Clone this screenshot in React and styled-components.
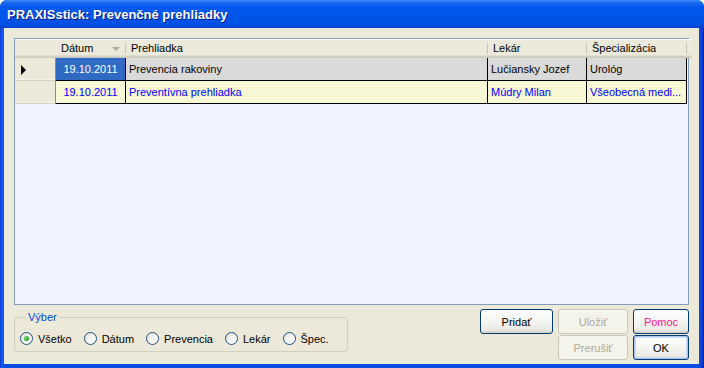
import styled, { createGlobalStyle } from 'styled-components';

const GlobalStyle = createGlobalStyle`
	html, body {
		margin: 0;
		padding: 0;
		width: 704px;
		height: 368px;
		overflow: hidden;
		background: #ffffff;
	}
	body {
		font-family: 'Liberation Sans', Arial, sans-serif;
		font-size: 11px;
		color: #000;
	}
`;

const Window = styled.div`
	width: 704px;
	height: 368px;
	box-sizing: border-box;
	display: flex;
	flex-direction: column;
	background: linear-gradient(to right, #0831d9 0, #1660f0 2px, #0a4de2 4px, #0a4de2 calc(100% - 5px), #0b3fd6 calc(100% - 2px), #0019a8 100%);
	border-radius: 7px 7px 0 0;
	overflow: hidden;
`;

const TitleBar = styled.div`
	height: 28px;
	flex: none;
	display: flex;
	align-items: center;
	padding-left: 7px;
	background: linear-gradient(
		to bottom,
		#3b8ef8 0,
		#1666f0 3px,
		#0058ee 8px,
		#0055e8 18px,
		#0052e4 24px,
		#0043cf 28px
	);
	color: #ffffff;
	font-family: 'Liberation Sans', Arial, sans-serif;
	font-weight: bold;
	font-size: 13px;
	text-shadow: 1px 1px #0a1883;
`;

const Body = styled.div`
	flex: 1;
	margin: 0 5px 4px 4px;
	background: #ece9d8;
	padding: 10px 10px 0 10px;
	display: flex;
	flex-direction: column;
`;

const DataGrid = styled.div`
	height: 267px;
	box-sizing: border-box;
	border: 1px solid #7f9db9;
	background: #eef3fd;
	display: grid;
	grid-template-columns: 41px 70px 362px 99px 100px 1fr;
	grid-auto-rows: min-content;
	align-content: start;
`;

const HeaderCell = styled.div`
	height: 19px;
	box-sizing: border-box;
	background: #ebeadb;
	box-shadow: inset 0 -1px #cbc7b8, inset 0 -2px #d6d2c2, inset 0 -3px #e2decd, inset 0 1px #ffffff;
	padding: 3px 0 0 5px;
	position: relative;
	white-space: nowrap;
	&::after {
		content: '';
		display: ${(p) => (p.$sep ? 'block' : 'none')};
		position: absolute;
		right: 0;
		top: 4px;
		width: 1px;
		height: 11px;
		background: #c7c5b2;
		box-shadow: 1px 0 #ffffff;
	}
`;

const SortArrow = styled.span`
	position: absolute;
	right: 6px;
	top: 8px;
	width: 0;
	height: 0;
	border-left: 4px solid transparent;
	border-right: 4px solid transparent;
	border-top: 4px solid #aca899;
`;

const RowHeader = styled.div`
	height: 23px;
	box-sizing: border-box;
	background: #ece9d8;
	border-right: 1px solid #8d8b7c;
	box-shadow: inset 0 -1px #d6d2c2, inset 0 -2px #f4f3ec;
	display: flex;
	align-items: center;
	padding-left: 6px;
`;

const RowMarker = styled.span`
	width: 0;
	height: 0;
	border-top: 5px solid transparent;
	border-bottom: 5px solid transparent;
	border-left: 5px solid #000000;
`;

const Cell = styled.div`
	height: 23px;
	box-sizing: border-box;
	border-right: 1px solid #000000;
	border-bottom: 1px solid #000000;
	background: ${(p) => (p.$selected ? '#316ac5' : p.$alt ? '#f7f7d4' : '#dadada')};
	color: ${(p) => (p.$selected ? '#ffffff' : p.$alt ? '#0000ff' : '#000000')};
	display: flex;
	align-items: center;
	justify-content: ${(p) => (p.$center ? 'center' : 'flex-start')};
	padding-left: ${(p) => (p.$center ? '0' : '3px')};
	white-space: nowrap;
	overflow: hidden;
`;

const Filler = styled.div`
	height: 23px;
`;

const Footer = styled.div`
	display: flex;
	justify-content: space-between;
	align-items: flex-start;
	padding-top: 4px;
`;

const GroupBox = styled.fieldset`
	margin: 2px 0 0 0;
	padding: 8px 0 6px 5px;
	width: 334px;
	box-sizing: border-box;
	border: 1px solid #d0d0bf;
	border-radius: 3px;
	display: flex;
	align-items: center;
	gap: 12px;
	legend {
		color: #0046d5;
		padding: 0 2px;
		margin-left: 6px;
		line-height: 13px;
	}
`;

const RadioLabel = styled.label`
	display: flex;
	align-items: center;
	gap: 5px;
	height: 13px;
	white-space: nowrap;
`;

const RadioCircle = styled.span`
	width: 13px;
	height: 13px;
	box-sizing: border-box;
	border-radius: 50%;
	border: 1px solid #1c5180;
	background: linear-gradient(135deg, #dcdcd7 0%, #f4f4f2 45%, #ffffff 100%);
	display: flex;
	align-items: center;
	justify-content: center;
	&::after {
		content: '';
		display: ${(p) => (p.$checked ? 'block' : 'none')};
		width: 5px;
		height: 5px;
		border-radius: 50%;
		background: radial-gradient(circle at 35% 35%, #7ee07a 0%, #2fb22c 55%, #1a8a18 100%);
	}
`;

const ButtonGrid = styled.div`
	display: grid;
	grid-template-columns: 73px 70px 56px;
	column-gap: 5px;
	row-gap: 1px;
`;

const Button = styled.button`
	height: 25px;
	box-sizing: border-box;
	margin: 0;
	padding: 0;
	font-family: 'Liberation Sans', Arial, sans-serif;
	font-size: 11px;
	border-radius: 3px;
	border: 1px solid ${(p) => (p.disabled ? '#c9c7ba' : '#003c74')};
	background: ${(p) =>
		p.disabled
			? '#f5f4ea'
			: 'linear-gradient(to bottom, #ffffff 0%, #f7f7f4 40%, #ecebe6 85%, #d6d0c5 100%)'};
	color: ${(p) => (p.disabled ? '#aca899' : p.$color || '#000000')};
	box-shadow: ${(p) => (p.$default ? 'inset 0 0 0 1px #a9c4ee, inset 0 0 0 2px #cedef7' : 'none')};
	grid-column: ${(p) => p.$col || 'auto'};
`;

const rows = [
	{ date: '19.10.2011', name: 'Prevencia rakoviny', doctor: 'Lučiansky Jozef', spec: 'Urológ', current: true },
	{ date: '19.10.2011', name: 'Preventívna prehliadka', doctor: 'Múdry Milan', spec: 'Všeobecná medi...' },
];

const filters = ['Všetko', 'Dátum', 'Prevencia', 'Lekár', 'Špec.'];

const App = () => (
	<>
		<GlobalStyle />
		<Window>
			<TitleBar>PRAXISstick: Prevenčné prehliadky</TitleBar>
			<Body>
				<DataGrid>
					<HeaderCell />
					<HeaderCell $sep>
						Dátum
						<SortArrow />
					</HeaderCell>
					<HeaderCell $sep>Prehliadka</HeaderCell>
					<HeaderCell $sep>Lekár</HeaderCell>
					<HeaderCell $sep>Špecializácia</HeaderCell>
					<HeaderCell />
					{rows.map((row, i) => [
						<RowHeader key={`h${i}`}>{row.current && <RowMarker />}</RowHeader>,
						<Cell key={`d${i}`} $center $selected={row.current} $alt={!row.current}>
							{row.date}
						</Cell>,
						<Cell key={`n${i}`} $alt={!row.current}>
							{row.name}
						</Cell>,
						<Cell key={`l${i}`} $alt={!row.current}>
							{row.doctor}
						</Cell>,
						<Cell key={`s${i}`} $alt={!row.current}>
							{row.spec}
						</Cell>,
						<Filler key={`f${i}`} />,
					])}
				</DataGrid>
				<Footer>
					<GroupBox>
						<legend>Výber</legend>
						{filters.map((f, i) => (
							<RadioLabel key={f}>
								<RadioCircle $checked={i === 0} />
								{f}
							</RadioLabel>
						))}
					</GroupBox>
					<ButtonGrid>
						<Button>Pridať</Button>
						<Button disabled>Uložiť</Button>
						<Button $color='#ff1493'>Pomoc</Button>
						<Button disabled $col='2'>
							Prerušiť
						</Button>
						<Button $default>OK</Button>
					</ButtonGrid>
				</Footer>
			</Body>
		</Window>
	</>
);

export default App;
